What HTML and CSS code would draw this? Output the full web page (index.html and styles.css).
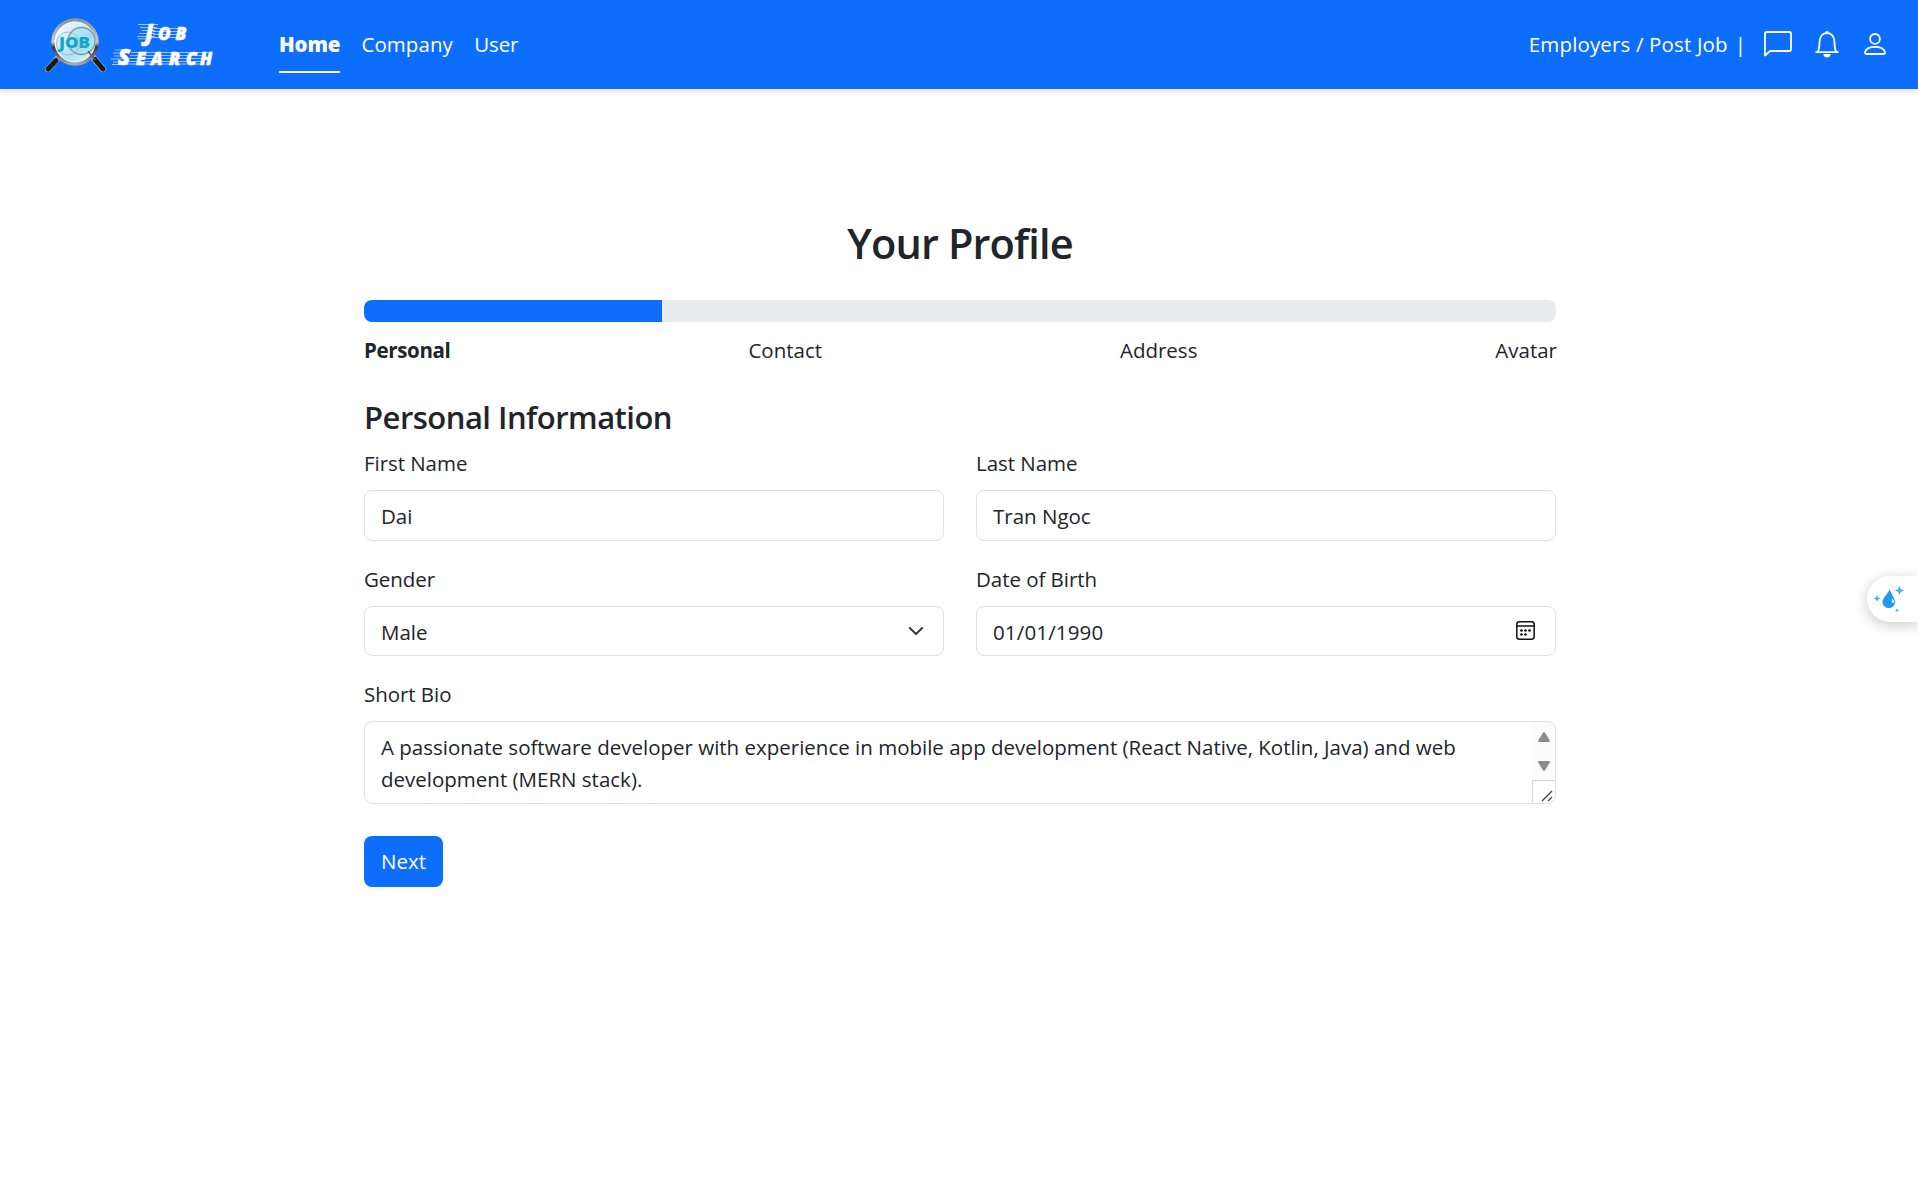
FILE: index.html
```html
<!DOCTYPE html>
<html lang="en">
<head>
<meta charset="utf-8">
<title>Job Search - Your Profile</title>
<link rel="stylesheet" href="styles.css">
</head>
<body>
<header class="navbar">
  <a class="brand" aria-label="Job Search">
    <svg class="brand-logo" width="180" height="64" viewBox="40 10 180 64">
      <defs>
        <linearGradient id="rim" x1="0" y1="0" x2="0" y2="1">
          <stop offset="0" stop-color="#8d949b"/><stop offset=".5" stop-color="#c9cdd0"/><stop offset=".62" stop-color="#34393f"/><stop offset="1" stop-color="#a5a9ac"/>
        </linearGradient>
        <linearGradient id="glass" x1="0" y1="0" x2="1" y2="1">
          <stop offset="0" stop-color="#fff"/><stop offset=".35" stop-color="#d4f0fb"/><stop offset=".6" stop-color="#a9e2f6"/><stop offset="1" stop-color="#f3fcff"/>
        </linearGradient>
      </defs>
      <g stroke-linecap="round">
        <path d="M58 58 48 69" stroke="#b9bec4" stroke-width="6"/>
        <path d="M56 60.500 48 69" stroke="#17191d" stroke-width="5"/>
        <path d="M91 55 103 69" stroke="#b9bec4" stroke-width="6"/>
        <path d="M95 59.500 103 69" stroke="#17191d" stroke-width="5"/>
      </g>
      <circle cx="75" cy="42" r="22" fill="url(#glass)" stroke="url(#rim)" stroke-width="3.400"/>
      <circle cx="75" cy="42" r="20" fill="none" stroke="#eef5f8" stroke-width="1"/>
      <circle cx="68" cy="43.500" r="11.500" fill="none" stroke="#a8bac3" stroke-width="1"/>
      <circle cx="81.500" cy="41" r="13.500" fill="#7fd6f2" fill-opacity=".3" stroke="#8b979e" stroke-width="1.400"/>
      <text class="glass-text" x="59" y="48.300" textLength="31" lengthAdjust="spacingAndGlyphs">JOB</text>
      <path d="m88 51 7 9" stroke="#5b6268" stroke-width="1.800"/>
      <g stroke="#fff" stroke-width=".7" opacity=".85">
        <path d="M138 24.500h20M140 27.500h17M142 30.500h13M139 33.500h16M137 36.500h18M138 38.800h14M154 28.500h28M153 31.500h26M153 34.500h27M151 37.500h30"/>
        <path d="M115 50h16M113 53h15M114 56h13M111 59h17M113 62h14M112 64.500h16M131 52.500h77M130 55.500h76M129 58.500h74M129 61.500h75M128 64h77"/>
      </g>
      <g class="brand-text">
        <text y="39.500"><tspan class="cap" x="145">J</tspan><tspan x="158">O</tspan><tspan x="175.500">B</tspan></text>
        <text y="64.500"><tspan class="cap" x="118">S</tspan><tspan x="136">E</tspan><tspan x="151">A</tspan><tspan x="169">R</tspan><tspan x="186">C</tspan><tspan x="200">H</tspan></text>
      </g>
    </svg>
  </a>
  <nav class="nav-links">
    <a class="nav-link active">Home</a>
    <a class="nav-link company">Company</a>
    <a class="nav-link user">User</a>
  </nav>
  <div class="nav-right">
    <a class="employers">Employers / Post Job</a>
    <span class="divider">|</span>
    <svg class="icon-chat" width="30" height="28" viewBox="0 0 30 28" fill="none" stroke="#fff" stroke-width="1.800" stroke-linejoin="round"><path d="M2 25.500V3.800Q2 2 3.800 2H26.200Q28 2 28 3.800V19.200Q28 21 26.200 21H7.200Z"/></svg>
    <svg class="icon-bell" width="26" height="28" viewBox="0 0 26 28" fill="none" stroke="#fff" stroke-width="1.800"><path d="M1.500 22.200H24.500M3.700 22C5.300 19.500 5.400 16 5.500 12.500C5.600 6.500 8.600 3 13 3S20.400 6.500 20.500 12.500C20.600 16 20.700 19.500 22.300 22"/><path d="M11 2.500Q13-.8 15 2.500ZM9.300 24H16.700Q16 27.500 13 27.500T9.300 24Z" fill="#fff" stroke="none"/></svg>
    <svg class="icon-user" width="24" height="24" viewBox="0 0 24 24" fill="none" stroke="#fff" stroke-width="1.800"><circle cx="12" cy="6.900" r="4.900"/><path d="M3.400 22H20.600Q22.300 22 22 20.200C21 16.600 17 14.900 12 14.900S3 16.600 2 20.200Q1.700 22 3.400 22Z"/></svg>
  </div>
</header>

<main class="profile">
  <h2 class="title">Your Profile</h2>
  <div class="progress"><div class="progress-bar" style="width:25%"></div></div>
  <div class="steps">
    <span class="step current">Personal</span>
    <span class="step">Contact</span>
    <span class="step">Address</span>
    <span class="step">Avatar</span>
  </div>
  <h4 class="section-title">Personal Information</h4>
  <form class="form">
    <div class="field">
      <label>First Name</label>
      <div class="control">Dai</div>
    </div>
    <div class="field">
      <label>Last Name</label>
      <div class="control">Tran Ngoc</div>
    </div>
    <div class="field">
      <label>Gender</label>
      <div class="control select">Male
        <svg width="22" height="22" viewBox="0 0 16 16" fill="none" stroke="#343a40" stroke-width="1.500" stroke-linecap="round" stroke-linejoin="round"><path d="m3.500 5.800 4.500 4.400 4.500-4.400"/></svg>
      </div>
    </div>
    <div class="field">
      <label>Date of Birth</label>
      <div class="control date">01/01/1990
        <svg width="19" height="19" viewBox="0 0 19 19" fill="none" stroke="#111" stroke-width="1.500"><rect x=".8" y=".8" width="17.400" height="17.400" rx="2.600"/><path d="M1 5H18"/><g fill="#111" stroke="none"><circle cx="5.500" cy="9.500" r="1.350"/><circle cx="9.500" cy="9.500" r="1.350"/><circle cx="13.500" cy="9.500" r="1.350"/><circle cx="5.500" cy="13.500" r="1.350"/><circle cx="9.500" cy="13.500" r="1.350"/></g></svg>
      </div>
    </div>
    <div class="field wide">
      <label>Short Bio</label>
      <div class="control bio">
        <p class="bio-text">A passionate software developer with experience in mobile app development (React Native, Kotlin, Java) and web<br>development (MERN stack).</p>
        <div class="scrollbar">
          <div class="track">
            <svg width="14" height="12" viewBox="0 0 14 12"><path d="M7 2 12 10H2Z" fill="#8b8b8b" stroke="#8b8b8b" stroke-width="2" stroke-linejoin="round"/></svg>
            <svg width="14" height="12" viewBox="0 0 14 12"><path d="M7 10 12 2H2Z" fill="#8b8b8b" stroke="#8b8b8b" stroke-width="2" stroke-linejoin="round"/></svg>
          </div>
          <div class="resizer">
            <svg width="12" height="12" viewBox="0 0 12 12" stroke="#444" stroke-width="1.400"><path d="M1 11 11 1M7 11l4-4"/></svg>
          </div>
        </div>
      </div>
    </div>
  </form>
  <button class="next">Next</button>
</main>

<aside class="assistant">
  <svg width="36" height="30" viewBox="0 0 36 30">
    <path d="M16.500 4C16 8 9.500 12.500 9.500 17.500A6.300 6.300 0 0 0 22 17.500C22 12.500 18.500 10 16.500 4Z" fill="#1d9bf0"/>
    <path d="M19.500 13.500Q21.500 16 20.800 17.500Q19.800 18.800 18.800 17.300Q18.700 16 19.500 13.500Z" fill="#fff"/>
    <g fill="#38b0f8"><path d="M26.500.8 27.800 4.200 31.200 5.500 27.800 6.800 26.500 10.200 25.200 6.800 21.800 5.500 25.200 4.200Z"/><path d="M4 10 5 12.500 7.400 13.500 5 14.500 4 17 3 14.500.6 13.500 3 12.500Z"/><path d="M24 23.300 24.700 24.900 26.300 25.500 24.700 26.100 24 27.700 23.300 26.100 21.700 25.500 23.300 24.900Z"/></g>
  </svg>
</aside>
</body>
</html>
```
FILE: styles.css
```css
* { box-sizing: border-box; }
body {
  margin: 0;
  min-height: 1199px;
  overflow: hidden;
  background: #fff;
  color: #212529;
  font: 20.5px/32px "Open Sans", "Noto Sans", sans-serif;
}
h2, h4, p { margin: 0; }

.navbar {
  display: flex;
  align-items: center;
  height: 89px;
  padding: 0 31px 0 40px;
  background: #0d6efd;
  color: #fff;
  box-shadow: 0 3px 6px rgba(0, 0, 0, .1);
}
.brand { display: flex; width: 239px; padding-bottom: 5px; }
.glass-text { font: 800 16.500px "Open Sans", sans-serif; fill: #14a5cf; }
.brand-text { font: italic 800 17px "Open Sans", sans-serif; fill: #fff; stroke: #fff; stroke-width: .6px; }
.brand-text .cap { font-size: 22px; }

.nav-links { display: flex; gap: 21.5px; height: 57px; }
.nav-link { height: 57px; padding-top: 12px; }
.nav-link.active {
  width: 61px;
  border-bottom: 2px solid #fff;
  font-weight: 800;
  letter-spacing: -.15px;
  white-space: nowrap;
}
.nav-link.company { letter-spacing: .05px; }
.nav-link.user { letter-spacing: -.2px; }

.nav-right { display: flex; align-items: center; margin-left: auto; padding-bottom: 2px; }
.employers { letter-spacing: .15px; }
.divider { margin: 0 17px 0 7px; }
.icon-bell { margin-left: 21px; }
.icon-user { margin-left: 23px; }

.profile { width: 1192px; margin: 129px auto 0 364px; }
.title {
  height: 51px;
  font-size: 41.5px;
  line-height: 51px;
  font-weight: 600;
  letter-spacing: -.85px;
  text-align: center;
}
.progress {
  height: 22px;
  margin-top: 31px;
  overflow: hidden;
  border-radius: 8px;
  background: #e9ecef;
}
.progress-bar { height: 100%; background: #0d6efd; }
.steps { display: flex; justify-content: space-between; height: 32px; margin: 12px -1px 0 0; }
.step.current { font-weight: 700; letter-spacing: -.35px; }
.section-title {
  margin-top: 32px;
  font-size: 31px;
  line-height: 39px;
  font-weight: 600;
  letter-spacing: -.52px;
}
.form {
  display: grid;
  grid-template-columns: 1fr 1fr;
  gap: 22px 32px;
  margin-top: 10px;
}
.field label { display: block; height: 43px; letter-spacing: -.05px; }
.field.wide { grid-column: 1 / 3; }
.control {
  display: flex;
  justify-content: space-between;
  height: 50.5px;
  padding: 9px 16px;
  border: 1px solid #dee2e6;
  border-radius: 8px;
}
.select svg { margin: 4px 0 0; }
.date { padding-right: 20px; letter-spacing: .15px; }
.date svg { margin-top: 5px; }
.bio { height: 83px; padding: 9px 0 0 16px; overflow: hidden; }
.bio-text { white-space: nowrap; }
.scrollbar { width: 23px; margin-top: -9px; }
.track {
  display: flex;
  flex-direction: column;
  align-items: center;
  gap: 17px;
  height: 58px;
  padding-top: 9px;
  background: #fcfcfc;
}
.resizer {
  display: flex;
  align-items: flex-end;
  justify-content: flex-end;
  height: 23px;
  padding: 0 2px 1px 0;
  border-top: 1px solid #d5d7da;
  border-left: 1px solid #d5d7da;
}
.next {
  display: block;
  width: 79px;
  height: 51px;
  margin-top: 32px;
  padding: 0 0 1px;
  border: 0;
  border-radius: 8px;
  background: #0d6efd;
  color: #fff;
  font: inherit;
}
.assistant {
  position: absolute;
  top: 576px;
  right: 0;
  width: 51px;
  height: 46px;
  padding: 9px 0 0 6px;
  border-radius: 23px 0 0 23px;
  background: #fff;
  box-shadow: 0 3px 14px rgba(0, 0, 0, .22);
}
```
